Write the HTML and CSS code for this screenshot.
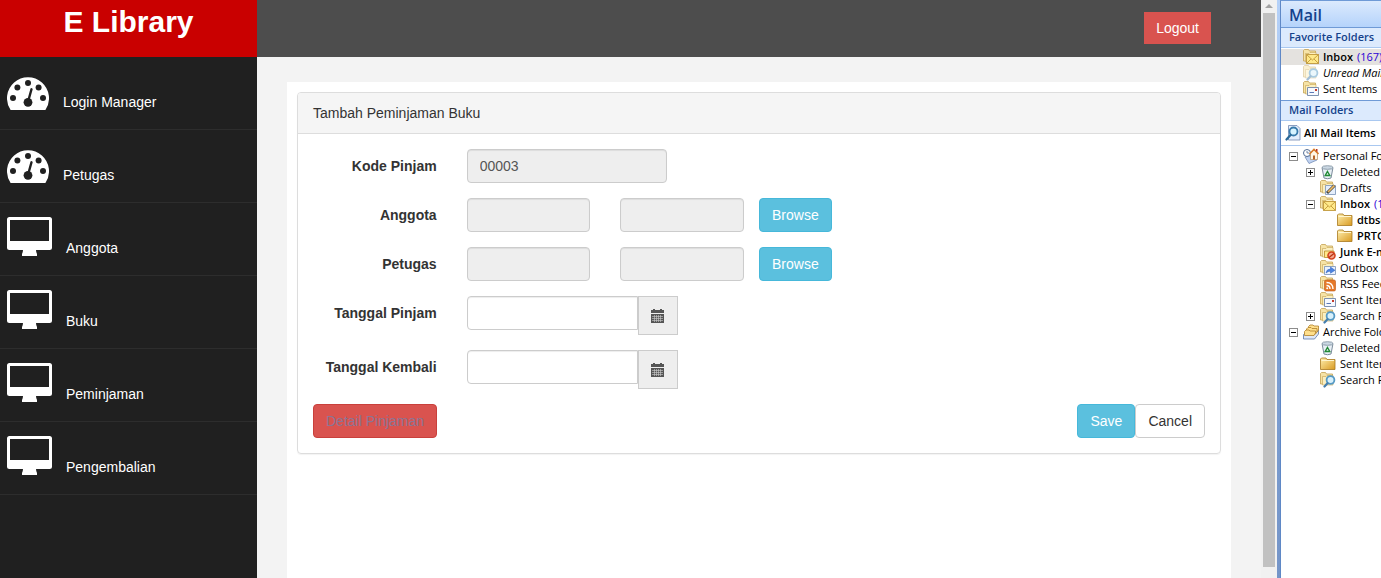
FILE: index.html
```html
<!DOCTYPE html>
<html lang="id">
<head>
<meta charset="utf-8">
<title>E Library</title>
<link rel="stylesheet" href="styles.css">
</head>
<body>
<svg class="defs" aria-hidden="true">
  <defs>
    <symbol id="gauge" viewBox="0 0 42 33">
      <path fill="#fff" d="M3.600 33A21 21 0 1 1 38.400 33Q38 33 37.500 33H4.500Q4 33 3.600 33Z"/>
      <g fill="#202020"><circle cx="21" cy="6" r="3"/><circle cx="10.400" cy="10.400" r="3"/><circle cx="31.600" cy="10.400" r="3"/><circle cx="6" cy="21" r="3"/><circle cx="36" cy="21" r="3"/><circle cx="21" cy="25.300" r="4.400"/></g>
      <path d="M21.500 23L24.500 12.300" stroke="#202020" stroke-width="2.400" stroke-linecap="round"/>
    </symbol>
    <symbol id="desktop" viewBox="0 0 45 39">
      <path fill="#fff" fill-rule="evenodd" d="M2.500 0H42.500Q45 0 45 2.500V30.500Q45 33 42.500 33H29Q29 35 30 37V39H15V37Q16 35 16 33H2.500Q0 33 0 30.500V2.500Q0 0 2.500 0ZM3 3V24H42V3Z"/>
    </symbol>
    <symbol id="calendar" viewBox="0 0 14 14">
      <path fill="#555" d="M0 1H2V0H4V1H9V0H11V1H13V4H0Z"/><path fill="#555" d="M0 5H13V14H0Z"/>
      <path stroke="#ccc" stroke-width=".6" d="M1 7.500H12M1 9.500H12M1 11.500H12M3.500 6V13M5.500 6V13M7.500 6V13M9.500 6V13"/>
    </symbol>
    <linearGradient id="gold" x2="1" y2="1"><stop offset="0" stop-color="#fff0b0"/><stop offset="1" stop-color="#d99a20"/></linearGradient>
    <symbol id="back" viewBox="0 0 16 16">
      <path fill="#f6e3a6" stroke="#c4a254" stroke-width=".8" d="M.5 12V1.500L1.500.5H5.500L6.500 2H12.500V12Z"/>
      <path fill="#fbefc0" stroke="#c4a254" stroke-width=".6" d="M2.500 13V4.500H6L7 3.500H13V13Z"/>
    </symbol>
    <symbol id="inbox" viewBox="0 0 16 16"><use href="#back"/><path fill="#ffe98a" stroke="#b98d2c" stroke-width=".8" d="M3.500 5.500H15.500V14.500H3.500Z"/><path fill="none" stroke="#b98d2c" stroke-width=".8" d="M3.500 5.500L9.500 11L15.500 5.500M3.500 14.500L8 10M15.500 14.500L11 10"/></symbol>
    <symbol id="sent" viewBox="0 0 16 16"><use href="#back"/><path fill="#f6f9ff" stroke="#6f86a8" stroke-width=".9" d="M4.500 6.500H15.500V14.500H4.500Z"/><path fill="#c43a2b" d="M12 8H14V10H12Z"/><path stroke="#5c79b5" d="M6.500 11.500H11"/></symbol>
    <symbol id="search" viewBox="0 0 16 16"><use href="#back"/><circle cx="10.500" cy="8" r="3.900" fill="#d8f0fb" stroke="#5599c4" stroke-width="1.800"/><path stroke="#467fae" stroke-width="2.200" stroke-linecap="round" d="M7.500 11.200L4.500 14.500"/></symbol>
    <symbol id="drafts" viewBox="0 0 16 16"><use href="#back"/><path fill="#e5eefb" stroke="#7690b5" stroke-width=".8" d="M5.500 5.500H15.500V14.500H5.500Z"/><path stroke="#444" stroke-width="3" d="M14.500 5.500L7 13"/><path stroke="#f0bb62" stroke-width="1.700" d="M14.300 5.700L8 12"/></symbol>
    <symbol id="outbox" viewBox="0 0 16 16"><use href="#back"/><path fill="#e9f1ff" stroke="#7690b5" stroke-width=".8" d="M4.500 6.500H15.500V14.500H4.500Z"/><path fill="#4b83e2" stroke="#2d61ba" stroke-width=".5" d="M6 13Q6.500 9 10.500 9V7L15 10.300L10.500 13.200V11.200Q8 11 6 13Z"/></symbol>
    <symbol id="rss" viewBox="0 0 16 16"><use href="#back"/><rect x="4.500" y="4" width="11" height="11" rx="1.500" fill="#e67929" stroke="#bd5514" stroke-width=".6"/><path fill="none" stroke="#fff" stroke-width="1.400" d="M6.500 6.500Q13 6.500 13 13M6.500 9.500Q10 9.500 10 13"/><circle cx="7.200" cy="12.300" r="1" fill="#fff"/></symbol>
    <symbol id="junk" viewBox="0 0 16 16"><use href="#back"/><path fill="#ffe98a" stroke="#b98d2c" stroke-width=".8" d="M4.500 7H14V13.500H4.500Z"/><circle cx="11.500" cy="11.500" r="3.500" fill="#f4a58b" stroke="#d4431e" stroke-width="1.600"/><path stroke="#b83210" stroke-width="1.300" d="M9 13.500L14 9.500"/></symbol>
    <symbol id="folder" viewBox="0 0 16 16"><path fill="url(#gold)" stroke="#a8781e" stroke-width=".8" d="M.5 13.500V3L1.500 2H6L7 3.500H15V13.500Z"/><path stroke="#fff6cf" d="M1.500 4.500H14"/></symbol>
    <symbol id="bin" viewBox="0 0 16 16"><path fill="#e8f0f6" stroke="#7b8b9b" d="M2 3.500L4 14Q7.500 15.500 11 14L13 3.500Z"/><ellipse cx="7.500" cy="3.500" rx="5.500" ry="1.800" fill="#cbd8e3" stroke="#7b8b9b" stroke-width=".8"/><path fill="none" stroke="#218a35" stroke-width="1.400" d="M7.500 7.500L9.800 11.500H5.200Z"/></symbol>
    <symbol id="home" viewBox="0 0 16 16"><path fill="#bfd2f1" stroke="#6883ae" stroke-width=".7" d="M2 9L10 7L14 12L6 15.500Z"/><circle cx="4" cy="5" r="3.500" fill="#fff" stroke="#536d94"/><path fill="none" stroke="#536d94" stroke-width=".8" d="M4 3V5H6"/><path fill="#fff7e5" stroke="#ac8048" stroke-width=".6" d="M7.500 5.500V11.500H14.500V5.500L11 2Z"/><path fill="none" stroke="#d77c2b" stroke-width="1.600" d="M6.500 6L11 1.500L15.500 6"/><path fill="#b86427" d="M10 7.500H12V11.500H10Z"/><path fill="#ba3526" d="M13 1H14.500V4L13 3Z"/></symbol>
    <symbol id="archive" viewBox="0 0 16 16"><path fill="#dfe8f8" stroke="#5d79a8" stroke-width=".8" d="M.5 10.500L2 9H12L15.500 6V10L11.500 15H.5Z"/><g fill="#ffdf8c" stroke="#b07f28" stroke-width=".8"><path d="M5.500 7V2.500L7 1H10L11 2H15.500V6L14 8Z"/><path d="M3.500 9.500V5L5 3.500H8L9 4.500H14V8L12.500 10Z"/><path d="M1.500 11.500V7.500L3 6H6L7 7H12.500V9L11 11.500Z"/></g></symbol>
    <symbol id="allmail" viewBox="0 0 16 16"><path fill="#e5eefc" stroke="#7189b1" stroke-width=".8" d="M3.500.5H12L15 3.500V15H3.500Z"/><circle cx="8.500" cy="6.500" r="4" fill="#d7f3ff" stroke="#397bac" stroke-width="1.800"/><path stroke="#2a6897" stroke-width="2.200" stroke-linecap="round" d="M5.500 10L1.500 14.500"/></symbol>
  </defs>
</svg>
<div class="screen">
  <aside class="sidebar">
    <h1 class="brand">E Library</h1>
    <nav class="menu">
      <a class="menu-item" href="#"><svg class="gauge"><use href="#gauge"/></svg>Login Manager</a>
      <a class="menu-item" href="#"><svg class="gauge"><use href="#gauge"/></svg>Petugas</a>
      <a class="menu-item" href="#"><svg class="desktop"><use href="#desktop"/></svg>Anggota</a>
      <a class="menu-item" href="#"><svg class="desktop"><use href="#desktop"/></svg>Buku</a>
      <a class="menu-item" href="#"><svg class="desktop"><use href="#desktop"/></svg>Peminjaman</a>
      <a class="menu-item" href="#"><svg class="desktop"><use href="#desktop"/></svg>Pengembalian</a>
    </nav>
  </aside>
  <main class="main">
    <header class="topbar"><a class="logout" href="#">Logout</a></header>
    <div class="page">
      <form class="panel">
        <h2 class="panel-title">Tambah Peminjaman Buku</h2>
        <div class="panel-body">
          <div class="row"><label class="label" for="kode">Kode Pinjam</label><div class="cell wide"><input class="field code" id="kode" value="00003" readonly></div></div>
          <div class="row"><label class="label" for="anggota">Anggota</label><div class="cell"><input class="field" id="anggota" readonly></div><div class="cell"><input class="field" aria-label="Nama anggota" readonly></div><div class="action"><button class="btn info" type="button">Browse</button></div></div>
          <div class="row"><label class="label" for="petugas">Petugas</label><div class="cell"><input class="field" id="petugas" readonly></div><div class="cell"><input class="field" aria-label="Nama petugas" readonly></div><div class="action"><button class="btn info" type="button">Browse</button></div></div>
          <div class="row"><label class="label" for="pinjam">Tanggal Pinjam</label><div class="cell wide date"><input class="field" id="pinjam"><button class="addon" type="button" aria-label="Pilih tanggal pinjam"><svg><use href="#calendar"/></svg></button></div></div>
          <div class="row"><label class="label" for="kembali">Tanggal Kembali</label><div class="cell wide date"><input class="field" id="kembali"><button class="addon" type="button" aria-label="Pilih tanggal kembali"><svg><use href="#calendar"/></svg></button></div></div>
          <div class="footer"><button class="btn danger" type="button">Detail Pinjaman</button><div class="submit"><button class="btn info" type="button">Save</button><button class="btn plain" type="button">Cancel</button></div></div>
        </div>
      </form>
    </div>
  </main>
  <div class="scrollbar"><span class="arrow"></span><span class="thumb"></span></div>
  <div class="frame"></div>
  <aside class="mail">
    <h2 class="mail-title">Mail</h2>
    <h3 class="mail-head">Favorite Folders</h3>
    <ul class="list favorites">
      <li class="item selected"><svg><use href="#inbox"/></svg><b>Inbox</b><span class="count">(167)</span></li>
      <li class="item unread"><svg><use href="#search"/></svg><i>Unread Mail</i></li>
      <li class="item"><svg><use href="#sent"/></svg>Sent Items</li>
    </ul>
    <h3 class="mail-head">Mail Folders</h3>
    <div class="all"><svg><use href="#allmail"/></svg><b>All Mail Items</b></div>
    <ul class="list tree">
      <li class="item"><button class="toggle" aria-label="Collapse"></button><svg><use href="#home"/></svg>Personal Folders</li>
      <li class="item sub"><button class="toggle plus" aria-label="Expand"></button><svg><use href="#bin"/></svg>Deleted Items</li>
      <li class="item sub"><svg><use href="#drafts"/></svg>Drafts</li>
      <li class="item sub"><button class="toggle" aria-label="Collapse"></button><svg><use href="#inbox"/></svg><b>Inbox</b><span class="count">(167)</span></li>
      <li class="item leaf"><svg><use href="#folder"/></svg><b>dtbsc</b></li>
      <li class="item leaf"><svg><use href="#folder"/></svg><b>PRTG</b></li>
      <li class="item sub"><svg><use href="#junk"/></svg><b>Junk E-mail</b></li>
      <li class="item sub"><svg><use href="#outbox"/></svg>Outbox</li>
      <li class="item sub"><svg><use href="#rss"/></svg>RSS Feeds</li>
      <li class="item sub"><svg><use href="#sent"/></svg>Sent Items</li>
      <li class="item sub"><button class="toggle plus" aria-label="Expand"></button><svg><use href="#search"/></svg>Search Folders</li>
      <li class="item"><button class="toggle" aria-label="Collapse"></button><svg><use href="#archive"/></svg>Archive Folders</li>
      <li class="item sub"><svg><use href="#bin"/></svg>Deleted Items</li>
      <li class="item sub"><svg><use href="#folder"/></svg>Sent Items</li>
      <li class="item sub"><svg><use href="#search"/></svg>Search Folders</li>
    </ul>
  </aside>
</div>
</body>
</html>
```
FILE: styles.css
```css
* { box-sizing: border-box; }
body { margin: 0; font: 14px/20px "Liberation Sans", Arial, sans-serif; color: #333; background: #f3f3f3; }
h1, h2, h3, ul { margin: 0; padding: 0; }
button, input { font: inherit; }
.defs { position: absolute; width: 0; height: 0; }
.screen { display: flex; min-height: 100vh; overflow: hidden; }

.sidebar { flex: 0 0 257px; background: #202020; }
.brand { height: 57px; padding-top: 4px; background: #c90000; color: #fff; text-align: center; font-size: 30px; line-height: 36px; }
.menu-item { display: flex; align-items: flex-end; gap: 14px; height: 73px; padding: 0 7px 17px; border-bottom: 1px solid #2d2d2d; color: #fff; text-decoration: none; }
.menu-item svg { margin-bottom: 2px; }
.gauge { width: 42px; height: 33px; }
.desktop { width: 45px; height: 39px; }

.main { flex: 1; min-width: 0; display: flex; flex-direction: column; }
.topbar { display: flex; justify-content: flex-end; height: 57px; padding: 12px 50px 0 0; background: #4d4d4d; }
.logout { height: 32px; padding: 6px 12px; background: #d9534f; color: #fff; text-decoration: none; }
.page { flex: 1; margin: 25px 30px 0; padding: 10px; background: #fff; }
.panel { border: 1px solid #ddd; border-radius: 4px; box-shadow: 0 1px 1px rgba(0, 0, 0, .05); }
.panel-title { padding: 10px 15px; background: #f5f5f5; border-bottom: 1px solid #ddd; border-radius: 3px 3px 0 0; font-size: 14px; font-weight: normal; line-height: 20px; }
.panel-body { display: grid; gap: 15px; padding: 15px; }
.row { display: grid; grid-template-columns: repeat(3, 2fr) 6fr; margin: 0 -15px; }
.label { padding: 7px 15px 0 0; text-align: right; font-weight: bold; white-space: nowrap; }
.cell { padding: 0 15px; min-width: 0; }
.wide { grid-column: 2 / -1; }
.field { display: block; width: 100%; height: 34px; padding: 6px 12px; border: 1px solid #ccc; border-radius: 4px; background: #fff; color: #555; box-shadow: inset 0 1px 1px rgba(0, 0, 0, .075); }
.field:read-only { background: #eee; }
.code { width: 200px; }
.date { display: flex; align-items: flex-start; }
.date .field { width: 171px; border-radius: 4px 0 0 4px; }
.addon { display: grid; place-items: center; width: 40px; height: 39px; padding: 0; border: 1px solid #ccc; background: #eee; }
.addon svg { width: 14px; height: 14px; }
.btn { height: 34px; padding: 6px 12px; border: 1px solid; border-radius: 4px; line-height: 20px; }
.info { background: #5bc0de; border-color: #46b8da; color: #fff; }
.danger { background: #d9534f; border-color: #c9403c; color: #8b7595; }
.plain { background: #fff; border-color: #ccc; color: #333; }
.footer, .submit { display: flex; justify-content: space-between; }

.scrollbar { flex: 0 0 16px; padding: 0 2px 11px; display: flex; flex-direction: column; background: #f1f1f1; }
.arrow { height: 13px; background: #a3a3a3; clip-path: polygon(6px 4px, 10px 8px, 2px 8px); }
.thumb { flex: 1; background: #c1c1c1; }
.frame { flex: 0 0 3px; background: linear-gradient(#b5d1f8, #a5c2ee 25%, #7d9fd2 60%, #7595c8); }

.mail { flex: 0 0 101px; border-left: 1px solid #5f88c6; border-top: 1px solid #6f9ad6; overflow: hidden; background: #fff; color: #000; font: 11px/16px "Open Sans", sans-serif; white-space: nowrap; }
.mail b { font-weight: 600; }
.mail svg { flex: none; width: 16px; height: 16px; }
.mail-title { height: 27px; padding: 3px 8px; border-bottom: 1px solid #6f9ad6; background: linear-gradient(#dceafd, #b5d3fb); color: #15428b; font-size: 16px; font-weight: 600; line-height: 22px; }
.mail-head { height: 20px; padding: 0 8px; border-bottom: 1px solid #a9c8f0; background: #dceafd; color: #15428b; font-size: 11px; font-weight: 600; line-height: 17px; }
.list { list-style: none; }
.favorites { padding: 1px 0 3px; border-bottom: 1px solid #6f9ad6; }
.item { display: flex; align-items: center; gap: 4px; height: 16px; padding-left: 22px; }
.selected { background: #e4e2df; }
.unread svg { opacity: .5; }
.count { color: #2a00d5; }
.all { display: flex; align-items: center; gap: 3px; height: 25px; padding-left: 4px; border-bottom: 1px solid #a9c8f0; }
.tree { padding-top: 2px; }
.sub { padding-left: 39px; }
.leaf { padding-left: 56px; }
.toggle { flex: none; width: 9px; height: 9px; margin: 0 1px 0 -14px; padding: 0; border: 1px solid #8c8c8c; background: linear-gradient(#000, #000) no-repeat 1px 3px / 5px 1px, #fff; }
.plus { background: linear-gradient(#000, #000) no-repeat 1px 3px / 5px 1px, linear-gradient(#000, #000) no-repeat 3px 1px / 1px 5px, #fff; }
```
